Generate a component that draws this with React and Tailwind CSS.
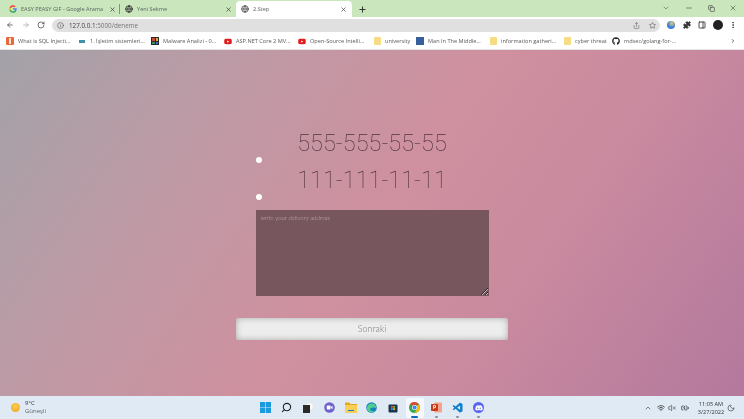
import React from "react";
import { ArrowLeft, ArrowRight, RotateCw, Info, Share, Star, Puzzle, MoreVertical, Search, Minus, X, Plus, ChevronDown, ChevronRight, ChevronUp, Globe, Wifi, VolumeX, BatteryCharging, Moon, Copy, PanelRight } from "lucide-react";
import { FaGithub, FaDiscord, FaYoutube } from "react-icons/fa";
import { VscVscode } from "react-icons/vsc";

const GoogleG = ({ s = 8 }) => (
  <svg width={s} height={s} viewBox="0 0 24 24">
    <path fill="#4285f4" d="M23 12.3c0-.8-.1-1.6-.2-2.3H12v4.4h6.2a5.3 5.3 0 0 1-2.3 3.5v2.9h3.7c2.2-2 3.4-5 3.4-8.5z" />
    <path fill="#34a853" d="M12 23.5c3.1 0 5.7-1 7.6-2.8l-3.7-2.9a7 7 0 0 1-10.4-3.6H1.7v3a11.5 11.5 0 0 0 10.3 6.3z" />
    <path fill="#fbbc05" d="M5.5 14.2a7 7 0 0 1 0-4.4v-3H1.7a11.5 11.5 0 0 0 0 10.4z" />
    <path fill="#ea4335" d="M12 5.1c1.7 0 3.200.6 4.400 1.700l3.300-3.300A11.500 11.500 0 0 0 1.700 6.800l3.800 3A6.900 6.900 0 0 1 12 5.100z" />
  </svg>
);

const Tab = ({ w, active, icon, label, sep, pad }) => (
  <div className={`${w} h-[16px] flex items-center relative ${active ? "bg-white rounded-t-[4px]" : ""} ${pad}`}>
    <span className="w-[8px] h-[8px] flex items-center justify-center shrink-0">{icon}</span>
    <span className="ml-[4px] flex-1 text-[5.6px] leading-[8px] text-[#5c665f] whitespace-nowrap overflow-hidden">{label}</span>
    <X size={7} strokeWidth={2.2} className="text-[#333] shrink-0" />
    {sep && <span className="absolute right-0 top-[3px] h-[10px] w-px bg-[#7d9a72]" />}
  </div>
);

const Mark = ({ w, icon, label }) => (
  <div className={`${w} flex items-center gap-[4px] shrink-0`}>
    <span className="w-[8px] h-[8px] flex items-center justify-center shrink-0">{icon}</span>
    <span className="text-[5.6px] leading-[8px] text-[#5a5a5a] whitespace-nowrap">{label}</span>
  </div>
);

const Yt = () => <FaYoutube size={9} className="text-[#e11c1c]" />;
const Fold = () => <span className="w-[7px] h-[8px] rounded-[1px] bg-[#f7dc83]" />;

const Radio = () => <span className="block w-[6px] h-[6px] rounded-full bg-white" />;

const Phone = ({ children }) => (
  <div className="w-[233px] flex flex-col">
    <div className="h-[27px] pt-[3px] flex items-center justify-center text-[23.500px] leading-[24px] font-thin text-[#4f3340]" style={{ fontFamily: '"Roboto", sans-serif' }}>{children}</div>
    <div className="h-[10px] flex items-center"><Radio /></div>
  </div>
);

const Slot = ({ children, active, dot }) => (
  <div className={`w-[18px] h-[20px] flex items-center justify-center rounded-[2px] relative ${active ? "bg-[#f4f8fc]" : ""}`}>
    {children}
    {dot && <span className={`absolute bottom-0 h-[2px] rounded-full ${active ? "w-[7px] bg-[#0a6fc4]" : "w-[3px] bg-[#8a8f96]"}`} />}
  </div>
);

export default function App() {
  return (
    <div className="w-[744px] h-[419px] flex flex-col overflow-hidden blur-[0.3px]" style={{ fontFamily: '"Open Sans", sans-serif' }}>
      {/* tab strip */}
      <div className="h-[17px] bg-[#c9e6bd] flex items-end shrink-0">
        <Tab w="w-[120px]" pad="pl-[9px] pr-[4px]" sep icon={<GoogleG />} label="EASY PEASY GIF - Google Arama" />
        <Tab w="w-[116px]" pad="pl-[5px] pr-[4px]" icon={<Globe size={8} strokeWidth={2.6} className="text-[#333]" />} label="Yeni Sekme" />
        <Tab w="w-[116px]" pad="px-[5px]" active icon={<Globe size={8} strokeWidth={2.6} className="text-[#555]" />} label="2.Step" />
        <div className="w-[20px] h-[16px] flex items-center justify-center"><Plus size={9} strokeWidth={2.4} className="text-[#222]" /></div>
        <div className="flex-1" />
        <div className="h-[16px] flex items-center pb-[2px]">
          <div className="w-[22px] flex justify-center"><ChevronDown size={8} className="text-[#666]" /></div>
          <div className="w-[23px] flex justify-center"><Minus size={8} className="text-[#555]" /></div>
          <div className="w-[22px] flex justify-center"><Copy size={7} className="text-[#333]" /></div>
          <div className="w-[22px] flex justify-center"><X size={8} className="text-[#555]" /></div>
        </div>
      </div>

      {/* toolbar */}
      <div className="h-[16px] bg-white flex items-center shrink-0 pl-[6px]">
        <ArrowLeft size={8} strokeWidth={2.2} className="text-[#444]" />
        <ArrowRight size={8} strokeWidth={2.2} className="text-[#a8a8a8] ml-[8px]" />
        <RotateCw size={8} strokeWidth={2.2} className="text-[#444] ml-[7px]" />
        <div className="ml-[7px] w-[608px] h-[13px] rounded-full bg-[#e0e0e0] flex items-center pl-[5px]">
          <Info size={7} className="text-[#555]" />
          <span className="ml-[5px] text-[6.300px] leading-[9px] text-[#444]">127.0.0.1<span className="text-[#777]">:5000/deneme</span></span>
          <div className="flex-1" />
          <Share size={7} className="text-[#666]" />
          <Star size={7} className="text-[#555] ml-[9px] mr-[4px]" />
        </div>
        <span className="ml-[7px] w-[8px] h-[8px] rounded-full bg-[radial-gradient(circle_at_60%_30%,#f0d060,#3a7fd9_55%)] shrink-0" />
        <Puzzle size={8} fill="#333" className="text-[#333] ml-[8px]" />
        <PanelRight size={8} strokeWidth={2.4} className="text-[#222] ml-[7px]" />
        <span className="ml-[7px] w-[10px] h-[10px] rounded-full bg-[#222] shrink-0" />
        <MoreVertical size={8} strokeWidth={2.6} className="text-[#333] ml-[6px]" />
      </div>

      {/* bookmarks */}
      <div className="h-[17px] bg-white border-b border-[#e4e4e4] flex items-center pl-[6px] shrink-0">
        <Mark w="w-[72px]" icon={<span className="w-[8px] h-[8px] bg-[#e8683a] rounded-[1px] flex items-center justify-center"><span className="w-[2px] h-[6px] bg-[#fbe4d8]" /></span>} label="What is SQL Injecti..." />
        <Mark w="w-[73px]" icon={<span className="w-[6px] h-[3px] bg-[#3e8fa8]" />} label="1. İşletim sistemleri..." />
        <Mark w="w-[73px]" icon={<span className="w-[8px] h-[8px] bg-[#2a2a2a] grid grid-cols-2 gap-px p-px"><span className="bg-[#d14a3a]" /><span className="bg-[#d6b43a]" /><span className="bg-[#3a8f5a]" /><span className="bg-[#3a6fd1]" /></span>} label="Malware Analizi - 0..." />
        <Mark w="w-[74px]" icon={<Yt />} label="ASP.NET Core 2 MV..." />
        <Mark w="w-[75px]" icon={<Yt />} label="Open-Source Intelli..." />
        <Mark w="w-[43px]" icon={<Fold />} label="university" />
        <Mark w="w-[73px]" icon={<span className="w-[8px] h-[8px] bg-[#35609c]" />} label="Man In The Middle..." />
        <Mark w="w-[74px]" icon={<Fold />} label="information gatheri..." />
        <Mark w="w-[49px]" icon={<Fold />} label="cyber threat" />
        <Mark w="w-[118px]" icon={<FaGithub size={8} className="text-[#222]" />} label="mdsec/golang-for-..." />
        <ChevronRight size={6} strokeWidth={3} className="text-[#444]" />
      </div>

      {/* page */}
      <div className="flex-1 flex flex-col items-center pt-[78px] bg-[linear-gradient(125deg,#a3a2a8_0%,#bd9aa5_25%,#cf909f_50%,#c98a9f_70%,#b3789d_100%)]">
        <Phone>555-555-55-55</Phone>
        <Phone>111-111-11-11</Phone>
        <textarea
          readOnly
          placeholder="write your delivery address"
          className="mt-[8px] block w-[233px] h-[86px] bg-[#77565e] px-[5px] py-[3px] text-[6px] leading-[10px] font-light text-[#c9b8bb] placeholder:text-[#c9b8bb] outline-none"
          style={{ fontFamily: '"Lato", sans-serif' }}
        />
        <button className="mt-[22px] w-[272px] h-[22px] rounded-[3px] bg-[#ededed] shadow-[inset_0_0_6px_#a8a8a8] text-[9px] font-light text-[#777]" style={{ fontFamily: '"Lato", sans-serif' }}>
          Sonraki
        </button>
      </div>

      {/* taskbar */}
      <div className="h-[23px] bg-[#dfeaf5] flex items-center shrink-0">
        <div className="flex items-center pl-[11px] w-[256px]">
          <span className="w-[9px] h-[9px] rounded-full bg-[radial-gradient(circle_at_50%_40%,#ffd24a,#f59a23)]" />
          <div className="ml-[5px] flex flex-col">
            <span className="text-[6px] leading-[7px] text-[#333]">9°C</span>
            <span className="text-[6px] leading-[8px] text-[#666]">Güneşli</span>
          </div>
        </div>
        <div className="flex items-center gap-[3.400px]">
          <Slot><svg width="11" height="11" viewBox="0 0 11 11"><path fill="#1a9be0" d="M0 0h5.200v5.200H0zM5.800 0H11v5.200H5.800zM0 5.800h5.200V11H0zM5.800 5.800H11V11H5.800z" /></svg></Slot>
          <Slot><Search size={11} strokeWidth={2.4} className="text-[#222] -scale-x-100" /></Slot>
          <Slot><svg width="10" height="10" viewBox="0 0 10 10"><rect x="3" y="0" width="7" height="7" fill="#fafafa" stroke="#ccc" strokeWidth="0.4" /><rect x="0" y="2" width="7" height="8" fill="#2b2b2b" /></svg></Slot>
          <Slot><svg width="11" height="11" viewBox="0 0 11 11"><circle cx="5.500" cy="5.500" r="5.300" fill="#6e62c9" /><rect x="2.800" y="3.500" width="3.800" height="4" rx="0.800" fill="#fff" /><path fill="#fff" d="M7 5l1.500-1.200v3.400L7 6z" /></svg></Slot>
          <Slot><svg width="12" height="11" viewBox="0 0 12 11"><path fill="#e6a817" d="M0 0.500h4.500l1 1.500H12v2H0z" /><path fill="#f8cf58" d="M0 3h12v8H0z" /><path fill="#1576c4" d="M3 8h6v1H3z" /></svg></Slot>
          <Slot><svg width="11" height="11" viewBox="0 0 11 11"><circle cx="5.500" cy="5.500" r="5.300" fill="#1a7fc4" /><path fill="#4fd08a" d="M1 7.500c2 3.500 6 3.500 8 1.500-2 .5-4.500 0-5-2 1-2 5-2 6.500-.5C10 3 8 1 5 1.500 2 2 .5 5 1 7.500z" /></svg></Slot>
          <Slot><svg width="10" height="10" viewBox="0 0 10 10"><rect x="0.500" y="1.500" width="9" height="8" rx="1" fill="#1c3550" /><rect x="3" y="3" width="1.800" height="1.800" fill="#e8562a" /><rect x="5.200" y="3" width="1.800" height="1.800" fill="#7ab829" /><rect x="3" y="5.200" width="1.800" height="1.800" fill="#1f9fe0" /><rect x="5.200" y="5.200" width="1.800" height="1.800" fill="#f6b91a" /></svg></Slot>
          <Slot active dot>
            <svg width="11" height="11" viewBox="0 0 24 24"><circle cx="12" cy="12" r="12" fill="#34a853" /><path fill="#ea4335" d="M12 0a12 12 0 0 1 10.400 6H12a6 6 0 0 0-5.700 4.100L2.400 4.500A12 12 0 0 1 12 0z" /><path fill="#fbbc05" d="M22.400 6A12 12 0 0 1 12 24l5.200-9A6 6 0 0 0 16 8z" /><circle cx="12" cy="12" r="5.500" fill="#fff" /><circle cx="12" cy="12" r="4.300" fill="#4285f4" /></svg>
          </Slot>
          <Slot dot><svg width="11" height="11" viewBox="0 0 11 11"><rect x="3" y="0.500" width="8" height="10" rx="1" fill="#f4a48c" /><rect x="0" y="2" width="7" height="7" rx="0.800" fill="#c83b1c" /><text x="1.700" y="7.300" fontSize="5.500" fill="#fff" fontWeight="700">P</text></svg></Slot>
          <Slot dot><VscVscode size={12} className="text-[#0f7fcc]" /></Slot>
          <Slot dot><span className="w-[11px] h-[11px] rounded-full bg-[#5865f2] flex items-center justify-center"><FaDiscord size={8} className="text-white" /></span></Slot>
        </div>
        <div className="flex-1" />
        <div className="flex items-center pr-[9px]">
          <ChevronUp size={8} className="text-[#444]" />
          <Wifi size={8} strokeWidth={2.6} className="text-[#444] ml-[5px]" />
          <VolumeX size={8} className="text-[#444] ml-[3px]" />
          <BatteryCharging size={8} className="text-[#222] ml-[5px]" />
          <div className="ml-[7px] w-[30px] flex flex-col items-center">
            <span className="text-[5.600px] leading-[8px] text-[#333] whitespace-nowrap">11:05 AM</span>
            <span className="text-[5.600px] leading-[8px] text-[#333]">3/27/2022</span>
          </div>
          <Moon size={8} className="text-[#444] ml-[1px]" />
        </div>
      </div>
    </div>
  );
}
